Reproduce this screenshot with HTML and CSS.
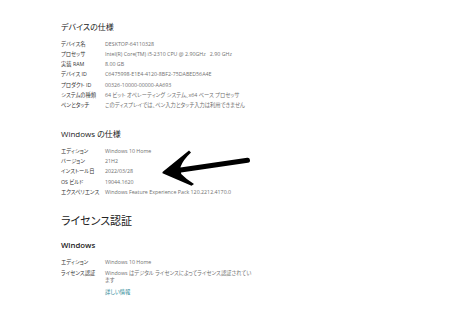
FILE: index.html
```html
<!DOCTYPE html>
<html lang="ja">
<head>
    <meta charset="UTF-8">
    <title>バージョン情報</title>
    <link rel="stylesheet" href="styles.css">
</head>
<body>
<div class="page">
    <section class="spec">
        <h2 class="title">デバイスの仕様</h2>
        <dl class="rows">
            <dt>デバイス名</dt><dd>DESKTOP-64110328</dd>
            <dt>プロセッサ</dt><dd>Intel(R) Core(TM) i5-2310 CPU @ 2.90GHz&nbsp;&nbsp;&nbsp;2.90 GHz</dd>
            <dt>実装 RAM</dt><dd>8.00 GB</dd>
            <dt>デバイス ID</dt><dd>C6475998-E1E4-4120-8BF2-75DABED56A4E</dd>
            <dt>プロダクト ID</dt><dd>00326-10000-00000-AA693</dd>
            <dt>システムの種類</dt><dd>64 ビット オペレーティング システム、x64 ベース プロセッサ</dd>
            <dt>ペンとタッチ</dt><dd>このディスプレイでは、ペン入力とタッチ入力は利用できません</dd>
        </dl>
    </section>

    <section class="spec spec-win">
        <h2 class="title">Windows の仕様</h2>
        <dl class="rows">
            <dt>エディション</dt><dd>Windows 10 Home</dd>
            <dt>バージョン</dt><dd>21H2</dd>
            <dt>インストール日</dt><dd>2022/03/28</dd>
            <dt>OS ビルド</dt><dd>19044.1620</dd>
            <dt>エクスペリエンス</dt><dd>Windows Feature Experience Pack 120.2212.4170.0</dd>
        </dl>
    </section>

    <section class="license">
        <h2 class="big-title">ライセンス認証</h2>
        <h3 class="sub-title">Windows</h3>
        <dl class="rows">
            <dt>エディション</dt><dd>Windows 10 Home</dd>
            <dt>ライセンス認証</dt><dd>Windows はデジタル ライセンスによってライセンス認証されてい<br>ます</dd>
        </dl>
        <a class="more" href="#">詳しい情報</a>
    </section>

    <!-- 矢印（注釈） -->
    <svg class="arrow" width="474" height="323" viewBox="0 0 474 323">
        <line x1="179" y1="170.3" x2="247.5" y2="160.3" stroke="#000" stroke-width="5" stroke-linecap="round"/>
        <path d="M162.5 172 L189 150.5 L191 152.6 Q183 160 180.5 167 L181.2 174 Q186 179 194 184 L191.5 185.8 L162.5 173.2 Z" fill="#000"/>
    </svg>
</div>
</body>
</html>
```

FILE: styles.css
```css
* {
    margin: 0;
    padding: 0;
}

body {
    background: #fff;
    font-family: "Open Sans", "Noto Sans CJK JP", sans-serif;
    font-feature-settings: "palt";
    color: #1a1a1a;
}

.page {
    position: relative;
    width: 474px;
    height: 323px;
    padding: 21px 0 0 61px;
    box-sizing: border-box;
}

.title {
    font-size: 8px;
    line-height: 12px;
    font-weight: normal;
    color: #222;
    margin-bottom: 7.5px;
}

.rows {
    display: grid;
    grid-template-columns: 44px auto;
    row-gap: 2.8px;
    font-size: 5.3px;
    line-height: 7.5px;
}

.rows dt {
    color: #333;
    white-space: nowrap;
}

.rows dd {
    color: #707070;
    white-space: nowrap;
}

.spec-win {
    margin-top: 18.5px;
}

.license {
    margin-top: 16.5px;
}

.big-title {
    font-size: 11px;
    line-height: 16px;
    font-weight: normal;
    color: #222;
}

.sub-title {
    font-size: 7.8px;
    line-height: 12px;
    font-weight: 600;
    color: #222;
    margin: 10.5px 0 8px;
}

.more {
    display: block;
    margin: 4.5px 0 0 44px;
    font-size: 5.3px;
    line-height: 7.5px;
    color: #2b8896;
    text-decoration: none;
}

.arrow {
    position: absolute;
    left: 0;
    top: 0;
}
```
